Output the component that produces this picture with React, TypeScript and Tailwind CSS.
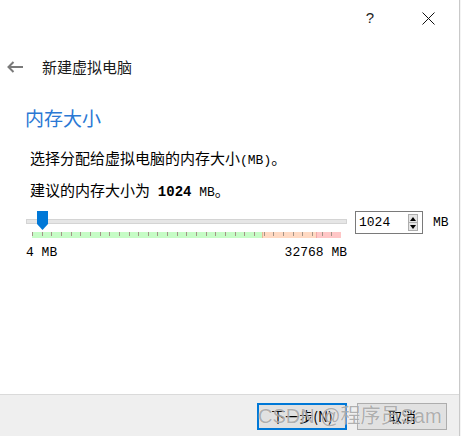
const cjk = "font-['Noto_Sans_CJK_SC',sans-serif]";
const mono = "font-['Liberation_Mono','Noto_Sans_CJK_SC',monospace]";

function Thumb() {
  return (
    <svg width="11" height="19" viewBox="0 0 11 19" className="absolute left-[11px] top-0">
      <path d="M0 0H11V13L5.5 19L0 13Z" fill="#0078d7" />
    </svg>
  );
}

function TickBar() {
  const ticks = Array.from({ length: 33 }, (_, i) => Math.round(i * 9.65) + 0.5);
  return (
    <svg width="309" height="6" viewBox="0 0 309 6" className="block">
      <rect x="0" y="0" width="230" height="6" fill="#c6fcc6" />
      <rect x="230" y="0" width="54" height="6" fill="#ffd9c2" />
      <rect x="284" y="0" width="25" height="6" fill="#ffc6c6" />
      <rect x="230" y="0" width="1" height="6" fill="#e8b898" />
      <rect x="284" y="0" width="1" height="6" fill="#f0a8a8" />
      {ticks.map((x) => (
        <line key={x} x1={x} y1="0" x2={x} y2="4" stroke="#a39488" strokeWidth="1" />
      ))}
    </svg>
  );
}

function SpinBox() {
  return (
    <div className="flex h-[23px] w-[68px] items-center border border-[#7a7a7a] bg-white">
      <span className={`${mono} pl-[3px] text-[13px] leading-none text-black`}>1024</span>
      <div className="ml-auto mr-[4px] flex h-[17px] w-[10px] flex-col border border-[#adadad] bg-[#e5e5e5]">
        <div className="flex flex-1 items-center justify-center border-b border-[#adadad]">
          <svg width="6" height="4" viewBox="0 0 6 4"><path d="M3 0L6 4H0Z" fill="#000" /></svg>
        </div>
        <div className="flex flex-1 items-center justify-center">
          <svg width="6" height="4" viewBox="0 0 6 4"><path d="M0 0H6L3 4Z" fill="#000" /></svg>
        </div>
      </div>
    </div>
  );
}

export default function App() {
  return (
    <div className="flex h-[436px] w-[461px] bg-[#f4f4f4]">
      <div className="relative flex h-full w-[459px] flex-col bg-white">
        {/* title bar */}
        <div className="flex h-[37px] items-center justify-end gap-[12px] pr-[8px]">
          <div className="flex w-[46px] justify-center font-['Liberation_Sans',sans-serif] text-[15px] text-[#222]">?</div>
          <div className="flex w-[46px] justify-center">
            <svg width="13" height="13" viewBox="0 0 13 13">
              <path d="M0.5 0.5L12.5 12.5M12.5 0.5L0.5 12.5" stroke="#111" strokeWidth="1" />
            </svg>
          </div>
        </div>

        {/* wizard nav */}
        <div className="mt-[13px] flex h-[34px] items-center">
          <svg width="16" height="12" viewBox="0 0 16 12" className="ml-[7px]">
            <path d="M16 6H1.5M6.5 1L1.5 6L6.5 11" stroke="#7a7a7a" strokeWidth="2" fill="none" />
          </svg>
          <span className={`${cjk} ml-[19px] text-[15px] text-[#1a1a1a]`}>新建虚拟电脑</span>
        </div>

        {/* page */}
        <div className="flex flex-col pl-[25px]">
          <h2 className={`${cjk} mt-[22px] text-[19px] leading-[24px] text-[#2a78d4]`}>内存大小</h2>
          <p className={`${cjk} ml-[5px] mt-[18px] text-[15px] leading-[20px] text-black`}>
            选择分配给虚拟电脑的内存大小<span className={`${mono} text-[13px]`}>(MB)</span>。
          </p>
          <p className={`${cjk} ml-[5px] mt-[9px] text-[15px] leading-[20px] text-black`}>
            建议的内存大小为<span className={`${mono} text-[13px]`}> </span>
            <span className={`${mono} text-[14px] font-bold`}>1024</span>
            <span className={`${mono} text-[13px]`}> MB</span>。
          </p>

          <div className="mt-[8px] flex items-start">
            <div className="ml-[1px] flex w-[321px] flex-col">
              <div className="relative h-[21px]">
                <div className="absolute left-0 right-0 top-[8px] h-[5px] border border-[#d4d4d4] bg-[#e6e6e6]" />
                <Thumb />
              </div>
              <div className="ml-[6px]">
                <TickBar />
              </div>
              <div className={`${mono} mt-[7px] flex justify-between text-[13px] leading-[15px] text-black`}>
                <span>4 MB</span>
                <span>32768 MB</span>
              </div>
            </div>
            <div className="ml-[8px]">
              <SpinBox />
            </div>
            <span className={`${mono} ml-[10px] mt-[4px] text-[13px] leading-[15px] text-black`}>MB</span>
          </div>
        </div>

        {/* footer */}
        <div className="mt-auto flex h-[42px] items-start justify-end gap-[10px] border-t border-[#dadada] bg-[#efefef] pr-[12px] pt-[8px]">
          <button className={`${cjk} h-[27px] w-[90px] border-2 border-[#0078d7] bg-[#e1e1e1] text-[14px] text-black`}>
            下一步(N)
          </button>
          <button className={`${cjk} h-[27px] w-[90px] border border-[#adadad] bg-[#e1e1e1] text-[14px] text-black`}>
            取消
          </button>
        </div>

        {/* watermark */}
        <div className="pointer-events-none absolute left-[258px] top-[404px] font-['Liberation_Sans','Noto_Sans_CJK_SC',sans-serif] text-[20px] leading-[24px] text-[rgba(110,110,110,0.55)] [text-shadow:0_0_1px_rgba(255,255,255,0.9)]">
          CSDN @程序员Sam
        </div>
      </div>
      <div className="h-full w-px bg-[#c9c9c9]" />
    </div>
  );
}
